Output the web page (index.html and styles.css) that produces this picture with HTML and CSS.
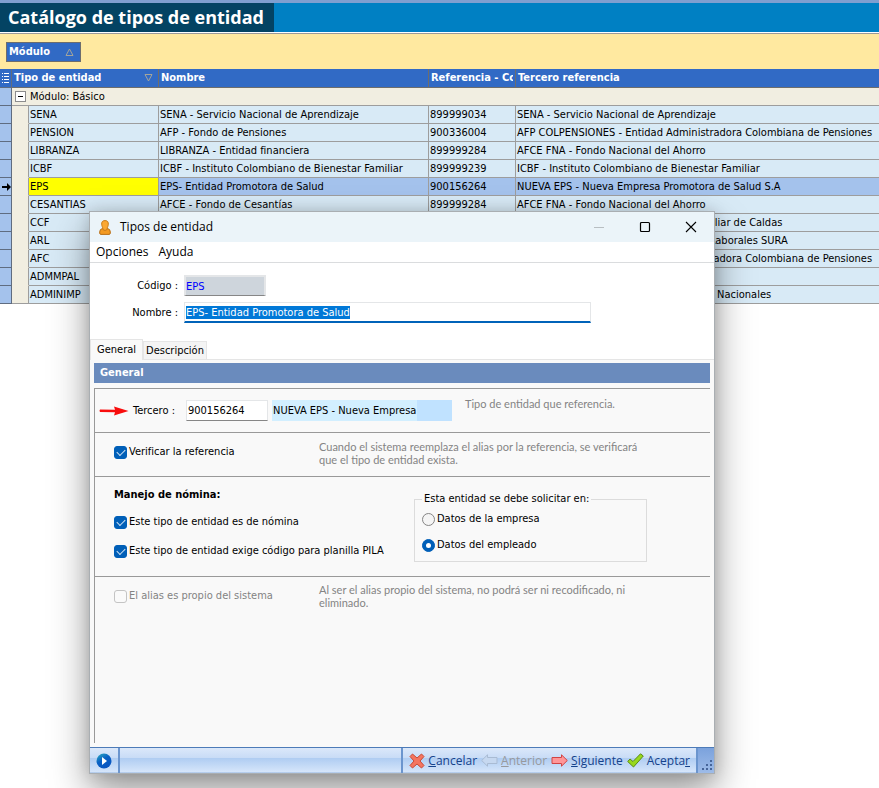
FILE: index.html
```html
<!DOCTYPE html>
<html lang="es">
<head>
<meta charset="utf-8">
<title>Catálogo de tipos de entidad</title>
<link rel="stylesheet" href="styles.css">
</head>
<body>
<header class="app-header"><h1 class="app-title">Catálogo de tipos de entidad</h1></header>
<div class="group-bar">
  <button class="group-chip" type="button">Módulo
    <svg width="9" height="8" viewBox="0 0 9 8"><path d="M4.5 1 L8 7.5 H1 Z" fill="none" stroke="#a5a59b"/></svg>
  </button>
</div>
<main>
<table class="grid">
  <colgroup><col class="c-mark"><col class="c-indent"><col class="c-type"><col class="c-name"><col class="c-ref"><col></colgroup>
  <thead>
    <tr>
      <th class="mark"><svg width="7" height="10" viewBox="0 0 7 10" shape-rendering="crispEdges"><path d="M0 0h1v1H0zM0 3h1v1H0zM0 6h1v1H0zM0 9h1v1H0zM2 0h5v1H2zM2 3h5v1H2zM2 6h5v1H2zM2 9h5v1H2z" fill="#fff"/></svg></th>
      <th colspan="2"><div class="th-sort">Tipo de entidad
        <svg width="9" height="8" viewBox="0 0 9 8"><path d="M4.5 7 L8 .5 H1 Z" fill="none" stroke="#a5a59b"/></svg></div></th>
      <th>Nombre</th><th><div class="th-clip">Referencia - Co</div></th><th>Tercero referencia</th>
    </tr>
  </thead>
  <tbody>
    <tr class="group"><td class="mark"></td><td colspan="5"><div class="group-label"><button class="toggle" type="button" aria-label="Contraer"></button>Módulo: Básico</div></td></tr>
    <tr><td class="mark"></td><td class="indent"></td><td>SENA</td><td>SENA - Servicio Nacional de Aprendizaje</td><td>899999034</td><td>SENA - Servicio Nacional de Aprendizaje</td></tr>
    <tr><td class="mark"></td><td class="indent"></td><td>PENSION</td><td>AFP - Fondo de Pensiones</td><td>900336004</td><td>AFP COLPENSIONES - Entidad Administradora Colombiana de Pensiones</td></tr>
    <tr><td class="mark"></td><td class="indent"></td><td>LIBRANZA</td><td>LIBRANZA - Entidad financiera</td><td>899999284</td><td>AFCE FNA - Fondo Nacional del Ahorro</td></tr>
    <tr><td class="mark"></td><td class="indent"></td><td>ICBF</td><td>ICBF - Instituto Colombiano de Bienestar Familiar</td><td>899999239</td><td>ICBF - Instituto Colombiano de Bienestar Familiar</td></tr>
    <tr class="current"><td class="mark"><svg width="9" height="8" viewBox="0 0 9 8"><path d="M0 3h5V0L9 4 5 8V5H0z" fill="#000"/></svg></td><td class="indent"></td><td class="cell-active">EPS</td><td>EPS- Entidad Promotora de Salud</td><td>900156264</td><td>NUEVA EPS - Nueva Empresa Promotora de Salud S.A</td></tr>
    <tr><td class="mark"></td><td class="indent"></td><td>CESANTIAS</td><td>AFCE - Fondo de Cesantías</td><td>899999284</td><td>AFCE FNA - Fondo Nacional del Ahorro</td></tr>
    <tr><td class="mark"></td><td class="indent"></td><td>CCF</td><td></td><td></td><td>CONFA - La Caja de Compensación Familiar de Caldas</td></tr>
    <tr><td class="mark"></td><td class="indent"></td><td>ARL</td><td></td><td></td><td>ARL SURA - Seguros de Vida y Riesgos Laborales SURA</td></tr>
    <tr><td class="mark"></td><td class="indent"></td><td>AFC</td><td></td><td></td><td>AFP COLPENSIONES - Entidad Administradora Colombiana de Pensiones</td></tr>
    <tr><td class="mark"></td><td class="indent"></td><td>ADMMPAL</td><td></td><td></td><td></td></tr>
    <tr><td class="mark"></td><td class="indent"></td><td>ADMINIMP</td><td></td><td></td><td>DIAN - Dirección - Impuestos y Aduanas Nacionales</td></tr>
  </tbody>
</table>
</main>

<section class="dialog" role="dialog" aria-labelledby="dlg-title">
  <div class="titlebar">
    <svg class="person" width="12" height="15" viewBox="0 0 12 15"><path d="M3.500 8.500 Q.7 9 .7 12 V13 Q.7 14.400 2 14.400 H10 Q11.300 14.400 11.300 13 V12 Q11.300 9 8.500 8.500 Z" fill="#f39a22" stroke="#b87018"/><path d="M6 .6 C8.600 .6 9.400 2 9.300 4.200 C9.200 6 8.600 7 8.200 8 V9.500 Q6 11.500 3.800 9.500 V8 C3.400 7 2.800 6 2.700 4.200 C2.600 2 3.400 .6 6 .6Z" fill="#fba833" stroke="#c67a1c"/></svg>
    <h2 id="dlg-title" class="dialog-title">Tipos de entidad</h2>
    <button class="win-btn" type="button" aria-label="Minimizar" disabled><svg width="12" height="12" viewBox="0 0 12 12"><path d="M1 6.500h10" stroke="#b8bec2"/></svg></button>
    <button class="win-btn" type="button" aria-label="Maximizar"><svg width="12" height="12" viewBox="0 0 12 12"><rect x="1.500" y="1.500" width="9" height="9" rx="1" fill="none" stroke="#000" stroke-width="1.200"/></svg></button>
    <button class="win-btn" type="button" aria-label="Cerrar"><svg width="12" height="12" viewBox="0 0 12 12"><path d="M1 1l10 10M11 1L1 11" stroke="#000" stroke-width="1.100"/></svg></button>
  </div>
  <nav class="menubar"><button type="button">Opciones</button><button type="button">Ayuda</button></nav>
  <div class="head-fields">
    <label for="codigo">Código :</label><input id="codigo" class="field code" type="text" value="EPS" readonly>
    <label for="nombre">Nombre :</label><input id="nombre" class="field name" type="text" value="EPS- Entidad Promotora de Salud">
  </div>
  <div class="tabs" role="tablist">
    <button class="tab active" type="button" role="tab" aria-selected="true">General</button><button class="tab" type="button" role="tab" aria-selected="false">Descripción</button>
  </div>
  <div class="panel">
    <h3 class="panel-title">General</h3>
    <div class="block block-ref">
      <svg class="arrow" width="30" height="10" viewBox="0 0 30 10"><path d="M1 3.500 L16 3.800 L15 .5 L29.500 5 L15 9.500 L16 6.300 L1 6 Q0 4.800 1 3.500Z" fill="#f80d0d"/></svg>
      <label for="tercero">Tercero :</label>
      <input id="tercero" class="field third" type="text" value="900156264">
      <output class="third-name" for="tercero">NUEVA EPS - Nueva Empresa</output>
      <p class="hint">Tipo de entidad que referencia.</p>
    </div>
    <div class="block block-check">
      <label class="check"><input type="checkbox" checked>Verificar la referencia</label>
      <p class="hint">Cuando el sistema reemplaza el alias por la referencia, se verificará que el tipo de entidad exista.</p>
    </div>
    <div class="block block-payroll">
      <div class="payroll">
        <h4 class="payroll-title">Manejo de nómina:</h4>
        <label class="check"><input type="checkbox" checked>Este tipo de entidad es de nómina</label>
        <label class="check"><input type="checkbox" checked>Este tipo de entidad exige código para planilla PILA</label>
      </div>
      <fieldset class="ask">
        <legend>Esta entidad se debe solicitar en:</legend>
        <label class="check"><input type="radio" name="ask">Datos de la empresa</label>
        <label class="check"><input type="radio" name="ask" checked>Datos del empleado</label>
      </fieldset>
    </div>
    <div class="block block-alias">
      <label class="check off"><input type="checkbox" disabled>El alias es propio del sistema</label>
      <p class="hint">Al ser el alias propio del sistema, no podrá ser ni recodificado, ni eliminado.</p>
    </div>
  </div>
  <footer class="statusbar">
    <button class="play" type="button" aria-label="Iniciar"><svg width="16" height="16" viewBox="0 0 16 16"><defs><linearGradient id="pg" x2="0.6" y2="1"><stop offset="0" stop-color="#2fb0c0"/><stop offset=".5" stop-color="#0860c4"/><stop offset="1" stop-color="#0a55c0"/></linearGradient></defs><circle cx="8" cy="8" r="7.500" fill="url(#pg)"/><path d="M6 4 L11 8 L6 12Z" fill="#fff"/></svg></button>
    <div class="status-space"></div>
    <div class="actions">
      <button class="action" type="button"><svg width="16" height="16" viewBox="0 0 16 16"><path d="M1 3.500 L3.500 1 L8 5 L12.500 1 L15 3.500 L11 8 L15 12.500 L12.500 15 L8 11 L3.500 15 L1 12.500 L5 8Z" fill="#f47560" stroke="#c94a35"/></svg><span><u>C</u>ancelar</span></button>
      <button class="action" type="button" disabled><svg width="17" height="13" viewBox="0 0 17 13"><path d="M.7 6.500 L6.500 .8 V3.500 H16 V9.500 H6.500 V12.200Z" fill="#c6d8f0" stroke="#a9bbd3"/></svg><span><u>A</u>nterior</span></button>
      <button class="action" type="button"><svg width="17" height="13" viewBox="0 0 17 13"><path d="M16.300 6.500 L10.500 .8 V3.500 H1 V9.500 H10.500 V12.200Z" fill="#ff9698" stroke="#d04444"/></svg><span><u>S</u>iguiente</span></button>
      <button class="action" type="button"><svg width="17" height="15" viewBox="0 0 17 15"><path d="M.7 8.500 L3 6 L6 8.500 L13.500 .8 L16.300 3 L6.500 14 Z" fill="#98d81c" stroke="#5a8a14" stroke-linejoin="round"/></svg><span>Acepta<u>r</u></span></button>
    </div>
    <div class="grip"><svg width="12" height="12" viewBox="0 0 12 12"><path d="M9 1h2v2H9zM5 5h2v2H5zM9 5h2v2H9zM1 9h2v2H1zM5 9h2v2H5zM9 9h2v2H9z" fill="#46659a"/></svg></div>
  </footer>
</section>
<script src="main.js"></script>
</body>
</html>
```
FILE: styles.css
```css
* { box-sizing: border-box; }

body {
  margin: 0;
  min-height: 100vh;
  position: relative;
  overflow: hidden;
  background: #fff;
  color: #000;
  font: 11px/14px "DejaVu Sans Condensed", "Noto Sans", sans-serif;
}

button, input { font: inherit; color: inherit; }
button { padding: 0; border: 0; background: none; }
h1, h2, h3, h4, p { margin: 0; }
svg { display: block; flex: none; }

.app-header {
  display: flex;
  border-top: 3px solid #7f9fd0;
  border-bottom: 1px solid #fff;
  background: #0080c3;
}
.app-title {
  padding: 0 10px 0 8px;
  background: #034363;
  color: #fff;
  font: bold 18px/29px "Open Sans", sans-serif;
}

.group-bar {
  padding: 8px 6px 7px;
  border-top: 1px solid #999;
  background: #ffe9a0;
}
.group-chip {
  display: flex;
  align-items: center;
  justify-content: space-between;
  width: 75px;
  height: 20px;
  padding: 0 6px 0 2px;
  border: 1px solid #6d6d6d;
  background: #316ac5;
  color: #fff;
  font-weight: bold;
}

.grid {
  width: 100%;
  table-layout: fixed;
  border-collapse: separate;
  border-spacing: 0;
}
.c-mark { width: 12px; }
.c-indent { width: 17px; }
.c-type { width: 130px; }
.c-name { width: 270px; }
.c-ref { width: 87px; }
.grid th, .grid td {
  height: 18px;
  padding: 0 0 0 1px;
  border-right: 1px solid #9d9d9d;
  border-bottom: 1px solid #9d9d9d;
  overflow: hidden;
  white-space: nowrap;
  text-align: left;
  line-height: 17px;
  vertical-align: middle;
}
.grid th:last-child, .grid td:last-child { border-right: 0; }
.grid th {
  height: 19px;
  padding-left: 2px;
  border-color: #6d6d6d;
  background: #316ac5;
  color: #fff;
  line-height: 18px;
}
.grid td { background: #d8eaf6; }
.grid .mark {
  padding: 0 0 0 2px;
  border-color: #5f6c80;
}
.grid td.mark { background: #a4c2ec; }
.grid .indent { border-bottom-color: #f1eee1; background: #f1eee1; }
.grid .group td:last-child { background: #f1eee1; }
.grid tr:last-child .indent { border-bottom-color: #9d9d9d; }
.grid .current td { background: #a4c2ec; }
.grid .current .indent { background: #f1eee1; }
.grid .current .cell-active { background: #ff0; }
.th-sort {
  display: flex;
  align-items: center;
  justify-content: space-between;
  padding-right: 5px;
}
.th-clip { margin-right: 2px; overflow: hidden; }
.group-label { display: flex; align-items: center; gap: 4px; padding-left: 2px; }
.toggle {
  display: grid;
  place-items: center;
  width: 11px;
  height: 11px;
  border: 1px solid #8c8c8c;
  background: #fff;
}
.toggle::before { content: ""; width: 5px; height: 1px; background: #000; }

.dialog {
  position: absolute;
  top: 211px;
  left: 89px;
  right: 164px;
  border: 1px solid #a9aeb2;
  background: #fff;
  box-shadow: 0 18px 36px rgba(0, 0, 0, .4), 0 0 14px rgba(0, 0, 0, .15);
}
.titlebar {
  display: flex;
  align-items: center;
  height: 30px;
  padding-left: 9px;
  background: #ebf4f9;
}
.dialog-title {
  flex: 1;
  padding-left: 9px;
  font: 12px/16px "Open Sans", sans-serif;
}
.win-btn { display: grid; place-items: center; width: 46px; height: 30px; }
.menubar {
  display: flex;
  gap: 10px;
  height: 21px;
  padding-left: 6px;
  border-bottom: 1px solid #dadcde;
  font: 12px/16px "Open Sans", sans-serif;
}
.head-fields {
  display: grid;
  grid-template-columns: 88px 1fr;
  column-gap: 6px;
  row-gap: 6px;
  align-items: center;
  padding: 12px 123px 16px 0;
}
.head-fields label { text-align: right; }
.field {
  height: 21px;
  padding: 0 1px;
  border: 1px solid #e4e6e8;
  border-bottom-color: #868686;
  background: #fff;
  outline: none;
}
.field.code {
  width: 82px;
  border-width: 2px;
  border-bottom-width: 1px;
  padding: 0;
  background: #ced5dc;
  color: #00f;
}
.field.name { width: 100%; border-bottom: 2px solid #0063b9; }
.field.name::selection { background: #0078d7; color: #fff; }

.tabs { display: flex; align-items: flex-end; border-bottom: 1px solid #e5e5e5; }
.tab {
  height: 18px;
  padding: 0 2px;
  border: 1px solid #e5e5e5;
  border-bottom: 0;
  background: #f4f4f4;
}
.tab.active {
  height: 21px;
  margin-bottom: -1px;
  padding: 0 6px;
  background: #f9f9f9;
}
.panel {
  padding: 3px 4px 4px;
  background: #f9f9f9;
}
.panel-title {
  margin-bottom: 5px;
  padding-left: 6px;
  background: #6a8bbd;
  color: #fff;
  font-size: 11px;
  line-height: 20px;
}
.block {
  display: flex;
  border-top: 1px solid #999;
  border-left: 1px solid #999;
}
.block-ref { align-items: center; height: 44px; padding-left: 4px; }
.arrow { margin-right: 4px; }
.third { width: 82px; margin: 0 4px 0 11px; }
.third-name {
  width: 180px;
  padding-left: 1px;
  background: linear-gradient(90deg, #d2efff 145px, #c0e2ff 145px);
  line-height: 21px;
  white-space: nowrap;
}
.hint {
  color: #848484;
  font: 11px/13px Lato, sans-serif;
}
.block-ref .hint { align-self: flex-start; margin: 8px 0 0 13px; }
.check { display: flex; align-items: center; gap: 2px; }
.check input {
  appearance: none;
  display: grid;
  place-items: center;
  flex: none;
  width: 13px;
  height: 13px;
  margin: 0;
  border: 1px solid #858585;
  border-radius: 3px;
  background: #f5f5f5;
}
.check input:checked { border-color: #005fb8; background: #005fb8; }
.check input[type="checkbox"]:checked::before {
  content: "";
  width: 7px;
  height: 4px;
  border: solid #cfe3f5;
  border-width: 0 0 1px 1px;
  transform: translateY(-1px) rotate(-45deg);
}
.check input[type="radio"] { border-radius: 50%; }
.check input[type="radio"]:checked::before {
  content: "";
  width: 5px;
  height: 5px;
  border-radius: 50%;
  background: #fff;
}
.check.off { color: #838383; }
.check.off input { border-color: #c4c4c4; background: #fafafa; }
.block-check { height: 44px; padding: 7px 0 0 19px; }
.block-check .check, .block-alias .check { align-self: flex-start; width: 205px; padding-top: 5px; }
.block-check .hint, .block-alias .hint { width: 335px; }
.block-payroll { height: 100px; padding-left: 19px; }
.payroll { display: flex; flex-direction: column; gap: 15px; width: 300px; padding-top: 11px; }
.payroll-title { margin-bottom: -2px; font-size: 11px; }
.ask {
  display: flex;
  flex-direction: column;
  gap: 12px;
  align-self: flex-start;
  width: 233px;
  margin: 15px 0 0;
  padding: 6px 7px 9px;
  border: 1px solid #dcdcdc;
}
.ask legend { margin-left: 0; padding: 0 2px; }
.block-alias { min-height: 167px; padding: 6px 0 0 19px; }
.block-alias .check { padding-top: 6px; }

.statusbar {
  display: flex;
  height: 26px;
  border-top: 1px solid #4d7bb8;
  background: linear-gradient(#dbe8fa 0, #c9dcf6 38%, #b0cdf2 42%, #d5e5fa 95%, #9fbce4);
}
.play { display: grid; place-items: center; width: 28px; }
.status-space { flex: 1; }
.status-space, .actions, .grip { border-left: 2px solid #6b95ce; }
.actions { display: flex; align-items: center; gap: 4px; padding: 0 6px; }
.action {
  display: flex;
  align-items: center;
  gap: 3px;
  color: #15428b;
  font: 12px/16px "Open Sans", sans-serif;
}
.action:disabled { color: #98999c; }
.grip {
  display: grid;
  place-items: end;
  width: 18px;
  padding: 0 1px 2px 0;
  background: linear-gradient(#7ba2dc, #9dbbe8);
}
```
FILE: main.js
```js
const nameField = document.getElementById('nombre');
nameField.focus();
nameField.select();
```
